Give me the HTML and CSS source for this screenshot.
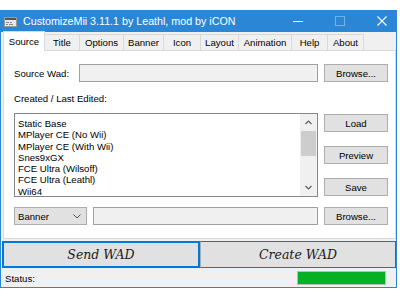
FILE: index.html
```html
<!DOCTYPE html>
<html>
<head>
<meta charset="utf-8">
<link rel="stylesheet" href="styles.css">
</head>
<body>
<div class="window">
  <div class="titlebar">
    <svg class="appicon" width="13" height="10" viewBox="0 0 13 10">
      <rect x="0.5" y="0.5" width="12" height="9" fill="#e8e8e8" stroke="#9a9a9a"/>
      <rect x="1" y="1" width="11" height="2" fill="#555"/>
      <rect x="2" y="5" width="3" height="1" fill="#888"/>
      <rect x="6" y="5" width="2" height="1" fill="#888"/>
      <rect x="2" y="7" width="2" height="1" fill="#888"/>
      <rect x="5" y="7" width="4" height="1" fill="#888"/>
    </svg>
    <span class="title">CustomizeMii 3.11.1 by Leathl, mod by iCON</span>
    <div class="controls">
      <svg width="10" height="10" viewBox="0 0 10 10"><rect x="0" y="5" width="10" height="1" fill="#fff"/></svg>
      <svg width="10" height="10" viewBox="0 0 10 10"><rect x="0.5" y="0.5" width="9" height="9" fill="none" stroke="#fff" stroke-opacity="0.35"/></svg>
      <svg width="10" height="10" viewBox="0 0 10 10"><path d="M0.5 0.5 L9.5 9.5 M9.5 0.5 L0.5 9.5" stroke="#fff" stroke-width="1.1"/></svg>
    </div>
  </div>
  <div class="tabstrip">
    <span class="tab active">Source</span>
    <span class="tab w-title">Title</span>
    <span class="tab w-options">Options</span>
    <span class="tab w-banner">Banner</span>
    <span class="tab w-icon">Icon</span>
    <span class="tab w-layout">Layout</span>
    <span class="tab w-anim">Animation</span>
    <span class="tab w-help">Help</span>
    <span class="tab w-about">About</span>
  </div>
  <div class="tabpage">
    <div class="row">
      <span class="label">Source Wad:</span>
      <div class="textbox grow"></div>
      <button class="btn">Browse...</button>
    </div>
    <div class="caption">Created / Last Edited:</div>
    <div class="row listrow">
      <div class="listbox grow">
        <ul class="items">
          <li>Static Base</li>
          <li>MPlayer CE (No Wii)</li>
          <li>MPlayer CE (With Wii)</li>
          <li>Snes9xGX</li>
          <li>FCE Ultra (Wilsoff)</li>
          <li>FCE Ultra (Leathl)</li>
          <li>Wii64</li>
        </ul>
        <div class="scrollbar">
          <svg class="arrow" width="7" height="5" viewBox="0 0 7 5"><path d="M0.5 4 L3.5 1 L6.5 4" fill="none" stroke="#606060" stroke-width="1.2"/></svg>
          <div class="track"><div class="thumb"></div></div>
          <svg class="arrow" width="7" height="5" viewBox="0 0 7 5"><path d="M0.5 1 L3.5 4 L6.5 1" fill="none" stroke="#606060" stroke-width="1.2"/></svg>
        </div>
      </div>
      <div class="btncol">
        <button class="btn">Load</button>
        <button class="btn">Preview</button>
        <button class="btn">Save</button>
      </div>
    </div>
    <div class="row bottomrow">
      <div class="combo">
        <span>Banner</span>
        <svg width="8" height="5" viewBox="0 0 8 5"><path d="M0.5 0.5 L4 4 L7.5 0.5" fill="none" stroke="#505050" stroke-width="1"/></svg>
      </div>
      <div class="textbox grow"></div>
      <button class="btn">Browse...</button>
    </div>
  </div>
  <div class="bigbtns">
    <button class="big send">Send WAD</button>
    <button class="big create">Create WAD</button>
  </div>
  <div class="statusbar">
    <span class="status">Status:</span>
    <div class="progress"><div class="fill" style="width:100%"></div></div>
  </div>
</div>
</body>
</html>
```
FILE: styles.css
```css
html, body {
  margin: 0;
  padding: 0;
  background: #ffffff;
}
body {
  padding-top: 10px;
  font-family: "Liberation Sans", Arial, sans-serif;
  font-size: 9.6px;
  color: #000;
}
.window {
  width: 397px;
  height: 278px;
  box-sizing: border-box;
  border: 1px solid #2b87d5;
  border-top: none;
  background: #f0f0f0;
  display: flex;
  flex-direction: column;
}
.titlebar {
  height: 22px;
  background: #2b87d5;
  display: flex;
  align-items: center;
  margin: 0 -1px;
  padding-left: 4px;
  color: #fff;
}
.appicon {
  margin-top: 1px;
  flex: none;
}
.title {
  font-family: "Liberation Sans", Arial, sans-serif;
  font-size: 10.7px;
  margin-left: 6px;
  white-space: nowrap;
}
.controls {
  margin-left: auto;
  display: flex;
  gap: 32px;
  padding-right: 10px;
  align-items: center;
}
.controls svg { display: block; }
.tabstrip {
  height: 18px;
  display: flex;
  align-items: flex-end;
  padding-left: 2px;
  position: relative;
  z-index: 1;
}
.tab {
  height: 16px;
  box-sizing: border-box;
  border: 1px solid #d9d9d9;
  border-left: none;
  border-bottom: none;
  background: #f0f0f0;
  display: flex;
  align-items: center;
  justify-content: center;
  white-space: nowrap;
}
.tab.active {
  height: 20px;
  margin-bottom: -1px;
  background: #ffffff;
  border-left: 1px solid #d9d9d9;
  width: 42px;
  padding-bottom: 1px;
}
.w-title { width: 35px; }
.w-options { width: 44px; }
.w-banner { width: 40px; }
.w-icon { width: 37px; }
.w-layout { width: 38px; }
.w-anim { width: 53px; }
.w-help { width: 36px; }
.w-about { width: 36px; }
.tabpage {
  height: 189px;
  box-sizing: border-box;
  margin: 0 0 0 2px;
  width: 393px;
  border: 1px solid #d9d9d9;
  background: #ffffff;
  padding: 13px 7px 0 10px;
}
.row {
  display: flex;
  gap: 6px;
  align-items: center;
}
.grow { flex: 1; }
.label {
  width: 59px;
  white-space: nowrap;
}
.textbox {
  height: 18px;
  box-sizing: border-box;
  border: 1px solid #a0a0a0;
  background: #f0f0f0;
}
.btn {
  width: 64px;
  height: 18px;
  box-sizing: border-box;
  border: 1px solid #adadad;
  background: #e1e1e1;
  font-family: "Liberation Sans", Arial, sans-serif;
  font-size: 9.6px;
  color: #000;
  padding: 0;
  margin: 0;
  flex: none;
}
.caption {
  margin-top: 11px;
  height: 12px;
  line-height: 12px;
}
.listrow {
  margin-top: 8px;
  align-items: flex-start;
}
.listbox {
  height: 84px;
  box-sizing: border-box;
  border: 1px solid #828790;
  background: #fff;
  display: flex;
}
.items {
  list-style: none;
  margin: 0;
  padding: 4px 0 0 3px;
  flex: 1;
  line-height: 11.3px;
}
.scrollbar {
  width: 17px;
  background: #f0f0f0;
  display: flex;
  flex-direction: column;
  align-items: center;
}
.arrow {
  margin: 6px 0;
  flex: none;
}
.track {
  flex: 1;
  width: 100%;
  display: flex;
  justify-content: center;
}
.thumb {
  width: 15px;
  height: 25px;
  background: #cdcdcd;
}
.btncol {
  display: flex;
  flex-direction: column;
  gap: 14px;
  margin-top: 1px;
}
.bottomrow {
  margin-top: 10px;
}
.combo {
  width: 73px;
  height: 18px;
  box-sizing: border-box;
  border: 1px solid #adadad;
  background: #e1e1e1;
  display: flex;
  align-items: center;
  justify-content: space-between;
  padding: 0 5px 0 3px;
  flex: none;
}
.bigbtns {
  display: flex;
  margin-top: 2px;
  height: 27px;
  padding: 0 0 0 1px;
}
.big {
  flex: 1;
  height: 27px;
  box-sizing: border-box;
  background: #e1e1e1;
  font-family: "DejaVu Serif", serif;
  font-style: italic;
  font-size: 12.5px;
  color: #1a1a1a;
  margin: 0;
  padding: 0;
}
.send {
  border: 2px solid #0078d7;
}
.create {
  border: 1px solid #0078d7;
  border-left: 1px solid #adadad;
}
.statusbar {
  flex: 1;
  display: flex;
  align-items: center;
  padding-left: 4px;
}
.status {
  margin-top: 1px;
}
.progress {
  margin-left: auto;
  margin-right: 10px;
  width: 89px;
  height: 14px;
  box-sizing: border-box;
  border: 1px solid #bcbcbc;
  background: #e6e6e6;
}
.fill {
  height: 100%;
  background: #06b025;
}
```
